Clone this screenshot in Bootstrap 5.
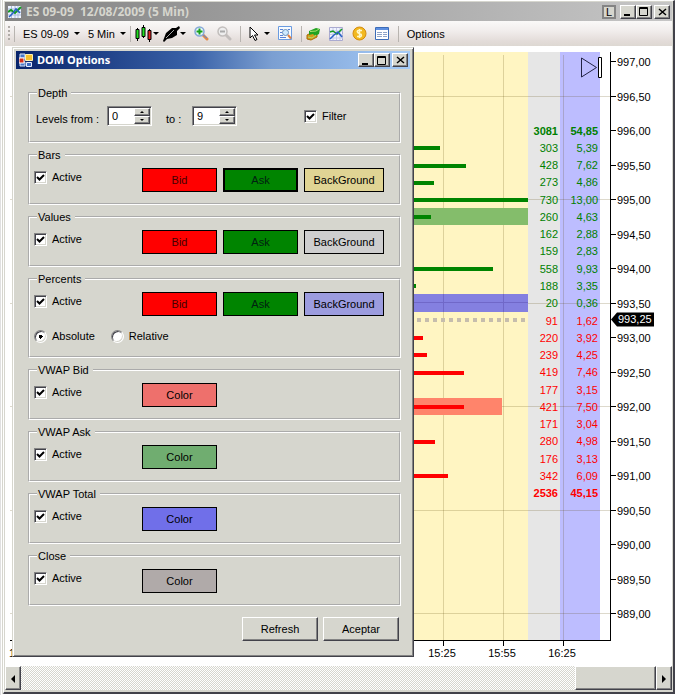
<!DOCTYPE html>
<html lang="es">
<head>
<meta charset="utf-8">
<meta name="viewport" content="width=device-width, initial-scale=1">
<title>ES 09-09 12/08/2009 (5 Min)</title>
<link href="https://cdn.jsdelivr.net/npm/bootstrap@5.3.0/dist/css/bootstrap.min.css" rel="stylesheet">
<style>
:root{--face:#d6d6ce;--shade:#848484;--dark:#42424a}
body{font:11px/14px "Liberation Sans",Arial,sans-serif;color:#000;background:#fff;padding:0 1px 2px 2px;border-left:1px solid #e0e0e0}
button,input{font:inherit;color:inherit}
.app-window{min-height:calc(100vh - 2px);background:var(--face);border:solid;border-width:1px 2px 2px 1px;border-color:#fff var(--dark) var(--dark) #fff;padding:1px 1px 2px;box-shadow:-1px 0 0 #d6d6ce}
.caption-bar{height:18px;color:#fff;font:bold 12px/18px "Noto Sans",Tahoma,sans-serif;white-space:pre}
.chart-caption{height:19px;line-height:19px;background:linear-gradient(90deg,#848484,#c6c6c6);color:#d6d6ce;padding:0 2px 0 3px}
.dialog-caption{background:linear-gradient(90deg,#08246b,#3a62a8 45%,#7b9fd2 65%,#a5cbf7);padding:0 2px 0 3px;font-size:11px}
.bevel{background:var(--face);border:1px solid;border-color:#fff var(--dark) var(--dark) #fff;box-shadow:inset -1px -1px 0 var(--shade);border-radius:0;padding:0;color:#000}
.cap-btn{width:16px;height:14px;display:flex;align-items:center;justify-content:center}
.l-btn{width:14px;height:14px;border:2px solid #848484;background:var(--face);font:11px/10px "Liberation Sans",sans-serif;padding:0;color:#000}
.tool-strip{height:25px;background:linear-gradient(#faf9f8,#f1edec 40%,#e3dcd9 80%,#ddd8d2);padding-left:3px}
.tool-strip button{border:0;background:none;padding:0;display:flex;align-items:center;white-space:nowrap}
.grip{width:2px;height:16px;background:repeating-linear-gradient(#b0aca8 0 2px,transparent 2px 4px)}
.divider{width:1px;height:16px;background:#b8b4b0}
.caret{width:0;border:3px solid transparent;border-top-color:#000;border-bottom:0;margin-left:5px}
.chart-area{background:#fff;min-height:620px}
.ladder{width:72px;height:380px;margin:76px 72px 0 auto;position:relative;text-align:right;table-layout:fixed;line-height:14px}
.ladder td{padding:0 2px 0 0}
.ladder td:first-child{width:32px}
.up{color:#008000}.down{color:#f00}
.chart-area text{font-size:11px}
.scroll-strip{height:24px;background:repeating-conic-gradient(#fff 0 25%,#d6d6ce 0 50%) 0 0/2px 2px}
.scroll-strip button{height:24px;width:16px}
.scroll-strip .thumb{width:81px}
.dialog-window{position:absolute;left:7px;top:1px;width:402px;background:var(--face);border:1px solid;border-color:var(--face) var(--dark) var(--dark) var(--face);box-shadow:inset 1px 1px 0 #fff,inset -1px -1px 0 var(--shade);padding:3px}
.dialog-content{padding:17px 9px 12px 12px}
.group-box{border:2px groove #fff;padding:6px 4px 0;margin:0 0 5px;min-height:57px}
.group-box legend{float:none;width:auto;font:inherit;margin:0 0 0 3px;padding:0 4px 0 1px}
.group-box.tall{min-height:86px}
.option-grid{display:grid;grid-template-columns:102px 75px 75px 80px;column-gap:6px;align-items:start}
.option-grid .check-line{margin-top:2px}
.check-line{display:flex;align-items:center;gap:5px}
.check-line input{appearance:none;margin:0;width:13px;height:13px;background:#fff;border:1px solid;border-color:#848484 #fff #fff #848484;box-shadow:inset 1px 1px 0 var(--dark),inset -1px -1px 0 var(--face)}
.check-line input[type=checkbox]:checked{background:#fff url("data:image/svg+xml,%3Csvg xmlns='http://www.w3.org/2000/svg' viewBox='0 0 11 11'%3E%3Cpath d='M2 5 4.500 7.500 9 3' fill='none' stroke='%23000' stroke-width='2'/%3E%3C/svg%3E")}
.check-line input[type=radio]{border-radius:50%}
.check-line input[type=radio]:checked{background:radial-gradient(circle,#000 0 2px,#fff 2px)}
.swatch{height:24px;border:1px solid #000;padding:0;border-radius:0}
.chosen{border-width:2px}
.c-red{background:#f00;color:#400}.c-green{background:#008400;color:#021}.c-sand{background:#e0d494}
.c-face{background:#cecece}.c-lilac{background:#9c9cde}.c-rose{background:#ee706c}
.c-moss{background:#70ad70}.c-blue{background:#706fe9}.c-ash{background:#b0aaa9}
.spin{width:45px;height:20px;background:#fff;border:1px solid;border-color:#848484 #fff #fff #848484;box-shadow:inset 1px 1px 0 var(--dark),inset -1px -1px 0 var(--face);padding:1px}
.spin input{border:0;background:none;padding:0 0 0 3px;width:25px;outline:0}
.spin .bevel{width:16px;height:8px;display:flex;align-items:center;justify-content:center}
.wide-btn{width:76px;height:24px}
.depth-label{width:73px;padding:5px 0 0 2px;white-space:nowrap}
.to-label{width:40px;padding:5px 0 0 14px}
.filter-line{margin-left:67px}
.mode-line{gap:16px;margin-top:13px}
.dialog-close{margin-left:2px}
.dialog-actions{gap:5px;padding:6px 2px 0 0}
</style>
<script src="https://cdn.jsdelivr.net/npm/bootstrap@5.3.0/dist/js/bootstrap.bundle.min.js"></script>
</head>
<body>
<main class="app-window d-flex flex-column">
  <header class="caption-bar chart-caption d-flex align-items-center">
    <svg width="14" height="14" viewBox="0 0 14 14" class="me-1" aria-hidden="true"><path d="M0 1h13v12H0z" fill="#eef4ff"/><path d="M0 4h13M0 7h13M0 10h13M3.500 1v12M7 1v12M10 1v12" stroke="#a8b8dc"/><path d="m0 7 3-2 4 3 6-6" fill="none" stroke="#159a22" stroke-width="2"/><path d="m1 12 4-4 3-4 4 4" fill="none" stroke="#2761c7" stroke-width="1.500"/></svg>
    <span>ES 09-09  12/08/2009 (5 Min)</span>
    <div class="d-flex ms-auto align-items-center">
      <button class="l-btn me-1">L</button>
      <button class="bevel cap-btn" aria-label="Minimize"><svg width="10" height="9"><path d="M1 7h6v2H1z"/></svg></button>
      <button class="bevel cap-btn" aria-label="Maximize"><svg width="10" height="9"><path d="M.500.500h8v8h-8zM0 1.500h9" fill="none" stroke="#000"/></svg></button>
      <button class="bevel cap-btn dialog-close" aria-label="Close"><svg width="9" height="8"><path d="m1 1 7 6M8 1 1 7" stroke="#000" stroke-width="1.500"/></svg></button>
    </div>
  </header>
  <nav class="tool-strip d-flex align-items-center" aria-label="Chart tools">
    <span class="grip"></span><span class="divider ms-1"></span>
    <button class="ms-2">ES 09-09<span class="caret"></span></button>
    <button class="ms-2">5 Min<span class="caret"></span></button>
    <span class="divider ms-1"></span>
    <button class="ms-1" aria-label="Chart style"><svg width="18" height="17"><path d="M2.500 3v13M8.500 0v13M14.500 4v13" stroke="#000"/><path d="M1 4.500h3v9H1zM7 2.500h3v9H7z" fill="#21e021" stroke="#000"/><path d="M13 5.500h3v9h-3z" fill="#e02020" stroke="#000"/></svg><span class="caret ms-0"></span></button>
    <button class="ms-1" aria-label="Draw"><svg width="17" height="16"><path d="m0 15 3-8 6-5h4l3-2 1 2-3 3v4l-5 3-5 1-3 3z"/><path d="m3 12 8-8" stroke="#aaa"/></svg><span class="caret ms-0"></span></button>
    <button class="ms-2" aria-label="Zoom in"><svg width="15" height="15"><path d="m9 9 4 4" stroke="#e08a4a" stroke-width="3" stroke-linecap="round"/><path d="m8 8 5 4" stroke="#5b83d6"/><circle cx="5.500" cy="5.500" r="4.500" fill="#e8f6ff" stroke="#84a9d6" stroke-width="1.500"/><path d="M2.500 5.500h6M5.500 2.500v6" stroke="#18a018" stroke-width="2"/></svg></button>
    <button class="ms-2" aria-label="Zoom out" disabled><svg width="15" height="15"><path d="m9 9 4 4" stroke="#c2bebc" stroke-width="3" stroke-linecap="round"/><circle cx="5.500" cy="5.500" r="4.500" fill="#eee" stroke="#c2bebc" stroke-width="1.500"/><path d="M3 5.500h5" stroke="#aaa" stroke-width="2"/></svg></button>
    <span class="divider ms-2"></span>
    <button class="ms-2" aria-label="Pointer"><svg width="11" height="16"><path d="M1 1v11l2.500-2.500 2.500 5 2-1-2.500-4.500H9z" fill="#fff" stroke="#000"/></svg><span class="caret ms-1"></span></button>
    <button class="ms-2" aria-label="Data box"><svg width="15" height="15"><path d="M.5.5h13v13H.5z" fill="#f8fbff" stroke="#6a9be0"/><path d="M2 3.500h3M2 6.500h2M2 9.500h3M2 11.500h6M10 3.500h2" stroke="#5b83d6"/><circle cx="7.500" cy="6.500" r="3" fill="#cfeaff" stroke="#6a8fb8"/><path d="m10 9 3 3.500" stroke="#e08040" stroke-width="2"/></svg></button>
    <span class="divider ms-2"></span>
    <button class="ms-1" aria-label="Trader"><svg width="15" height="14"><path d="m1 8 4-2 6 1v3l-6 3-4-1z" fill="#d69a18" stroke="#a66d08"/><path d="m3 4 7-3 4 1-1 5-4 2-2-2-4 1z" fill="#22a322"/><path d="M4 4.500 10 4l3-2M2 10l4 1 4-3" stroke="#a9e36d" fill="none"/></svg></button>
    <button class="ms-2" aria-label="Chart"><svg width="15" height="14"><path d="M.5.5h13v13H.5z" fill="#f0f3ff" stroke="#aaaad0"/><path d="M1 4h13M1 7.500h13M1 11h13M4 1v12M7.500 1v12M11 1v12" stroke="#c4cae6"/><path d="m1 5 3-1 4 3 5-5" fill="none" stroke="#159a22" stroke-width="1.500"/><path d="m1 12 4-4 4-3 4 5" fill="none" stroke="#2761c7" stroke-width="1.500"/></svg></button>
    <button class="ms-2" aria-label="Account"><svg width="15" height="15"><circle cx="7.500" cy="7.500" r="6.500" fill="#f2b920" stroke="#d48b0c"/><path d="M10 4.500H6.500C4.500 4.500 5 7 7.500 7.500S10 10.500 8 10.500H5M7.500 3v9" fill="none" stroke="#fff8cc" stroke-width="1.500"/></svg></button>
    <button class="ms-2" aria-label="Properties"><svg width="15" height="13"><path d="M.5.5h13v12H.5z" fill="#fff" stroke="#3c6cb8"/><path d="M1 1h12v2H1z" fill="#5d8fe0"/><path d="M2 5.500h5M2 7.500h5M2 9.500h5M8 5.500h4M8 7.500h4M8 9.500h4" stroke="#8fa3c8"/></svg></button>
    <span class="divider ms-2"></span>
    <button class="ms-2">Options</button>
  </nav>

  <section class="chart-area position-relative flex-grow-1 overflow-hidden" aria-label="Depth of market chart">
    <svg class="position-absolute top-0 start-0 w-100 h-100">
      <svg x="100%" overflow="visible"><g transform="translate(-672 -46)">
        <path d="M12 52h516v588H12z" fill="#fff5c2"/><path d="M5 46h8v594H5z" fill="#fff"/><path d="M528 52h32v588h-32z" fill="#e6e6e6"/><path d="M560 52h40v588h-40z" fill="#bdbdff"/>
        <g id="gridLines" stroke="#54400033" shape-rendering="crispEdges"><path d="M443.500 55v585M503.500 55v585M563.500 55v585"/></g>
        <path d="M414 208h114v17H414z" fill="#84bd6b"/><path d="M414 294h114v18H414z" fill="#8480e0"/><path d="M414 302.500h114M443.500 294v18M503.500 294v18" stroke="#7068c8"/>
        <path d="M414 398h88v17h-88z" fill="#ff846b"/>
        <path d="M417 320h111" stroke="#c6bdad" stroke-width="4" stroke-dasharray="4 4"/>
        <g id="volumeBars"></g>
        <path d="M610.500 52v588.500H10M443.500 640v6M503.500 640v6M563.500 640v6" fill="none" stroke="#000" shape-rendering="crispEdges"/>
        <path d="M581.500 58v19l15-9.500z" fill="none" stroke="#224"/><path d="M598.500 57.500h3v20h-3z" fill="#fff" stroke="#000"/>
        <g id="priceScale"></g>
        <path d="m611 319.500 6-7h37v14h-37z"/><text x="618" y="323" fill="#fff">993,25</text>
        <g text-anchor="middle"><text x="442" y="657">15:25</text><text x="502" y="657">15:55</text><text x="562" y="657">16:25</text></g>
        <text x="9" y="657">1</text>
      </g></svg>
    </svg>
    <table class="ladder" aria-label="Volume and percent by level"><tbody id="ladderRows"></tbody></table>

    <section class="dialog-window" role="dialog" aria-label="DOM Options">
      <header class="caption-bar dialog-caption d-flex align-items-center">
        <svg width="14" height="14" class="me-1" aria-hidden="true"><path d="M1 1h5v4H1zM1 9h5v4H1z" fill="#4878c8" stroke="#d8e4f8"/><path d="M0 5h5v5H0z" fill="#d22c18" stroke="#fff"/><path d="M6.500 1.500h7v6h-7z" fill="#f4c030" stroke="#fff2b0"/><path d="M7.500 9.500h5v4h-5z" fill="#3f6cc0" stroke="#e4ecff"/></svg>
        <span>DOM Options</span>
        <div class="d-flex ms-auto">
          <button class="bevel cap-btn" aria-label="Minimize dialog"><svg width="10" height="9"><path d="M1 7h6v2H1z"/></svg></button>
          <button class="bevel cap-btn" aria-label="Maximize dialog"><svg width="10" height="9"><path d="M.500.500h8v8h-8zM0 1.500h9" fill="none" stroke="#000"/></svg></button>
          <button class="bevel cap-btn dialog-close" aria-label="Close dialog"><svg width="9" height="8"><path d="m1 1 7 6M8 1 1 7" stroke="#000" stroke-width="1.500"/></svg></button>
        </div>
      </header>
      <form class="dialog-content">
        <fieldset class="group-box"><legend>Depth</legend>
          <div class="d-flex align-items-center">
            <label for="lvFrom" class="depth-label">Levels from :</label>
            <div class="spin d-flex"><input id="lvFrom" value="0" inputmode="numeric"><div><button type="button" class="bevel" aria-label="Increase from"><svg width="4" height="2"><path d="M0 2h4L2 0z"/></svg></button><button type="button" class="bevel" aria-label="Decrease from"><svg width="4" height="2"><path d="M0 0h4L2 2z"/></svg></button></div></div>
            <label for="lvTo" class="to-label">to :</label>
            <div class="spin d-flex"><input id="lvTo" value="9" inputmode="numeric"><div><button type="button" class="bevel" aria-label="Increase to"><svg width="4" height="2"><path d="M0 2h4L2 0z"/></svg></button><button type="button" class="bevel" aria-label="Decrease to"><svg width="4" height="2"><path d="M0 0h4L2 2z"/></svg></button></div></div>
            <label class="check-line filter-line"><input type="checkbox" checked>Filter</label>
          </div>
        </fieldset>
        <fieldset class="group-box"><legend>Bars</legend><div class="option-grid"><label class="check-line"><input type="checkbox" checked>Active</label><button type="button" class="swatch c-red">Bid</button><button type="button" class="swatch c-green chosen">Ask</button><button type="button" class="swatch c-sand">BackGround</button></div></fieldset>
        <fieldset class="group-box"><legend>Values</legend><div class="option-grid"><label class="check-line"><input type="checkbox" checked>Active</label><button type="button" class="swatch c-red">Bid</button><button type="button" class="swatch c-green">Ask</button><button type="button" class="swatch c-face">BackGround</button></div></fieldset>
        <fieldset class="group-box tall"><legend>Percents</legend><div class="option-grid"><label class="check-line"><input type="checkbox" checked>Active</label><button type="button" class="swatch c-red">Bid</button><button type="button" class="swatch c-green">Ask</button><button type="button" class="swatch c-lilac">BackGround</button></div>
          <div class="d-flex mode-line"><label class="check-line"><input type="radio" name="mode" checked>Absolute</label><label class="check-line"><input type="radio" name="mode">Relative</label></div></fieldset>
        <fieldset class="group-box"><legend>VWAP Bid</legend><div class="option-grid"><label class="check-line"><input type="checkbox" checked>Active</label><button type="button" class="swatch c-rose">Color</button></div></fieldset>
        <fieldset class="group-box"><legend>VWAP Ask</legend><div class="option-grid"><label class="check-line"><input type="checkbox" checked>Active</label><button type="button" class="swatch c-moss">Color</button></div></fieldset>
        <fieldset class="group-box"><legend>VWAP Total</legend><div class="option-grid"><label class="check-line"><input type="checkbox" checked>Active</label><button type="button" class="swatch c-blue">Color</button></div></fieldset>
        <fieldset class="group-box"><legend>Close</legend><div class="option-grid"><label class="check-line"><input type="checkbox" checked>Active</label><button type="button" class="swatch c-ash">Color</button></div></fieldset>
        <div class="d-flex justify-content-end dialog-actions"><button type="button" class="bevel wide-btn">Refresh</button><button type="button" class="bevel wide-btn">Aceptar</button></div>
      </form>
    </section>
  </section>
  <div class="scroll-strip d-flex">
    <button class="bevel" aria-label="Scroll left"><svg width="4" height="8"><path d="M4 0v8L0 4z"/></svg></button>
    <button class="bevel thumb ms-auto" aria-label="Scroll position"></button>
    <button class="bevel" aria-label="Scroll right"><svg width="4" height="8"><path d="M0 0v8l4-4z"/></svg></button>
  </div>
</main>
<script>
const ladder = [[3081,'54,85'],[303,'5,39'],[428,'7,62'],[273,'4,86'],[730,'13,00'],[260,'4,63'],[162,'2,88'],[159,'2,83'],[558,'9,93'],[188,'3,35'],[20,'0,36'],
  [91,'1,62'],[220,'3,92'],[239,'4,25'],[419,'7,46'],[177,'3,15'],[421,'7,50'],[171,'3,04'],[280,'4,98'],[176,'3,13'],[342,'6,09'],[2536,'45,15']];
const priceY = p => Math.round(62 + (997 - p) * 69);
let rows = '', bars = '', scale = '', lines = '';
ladder.forEach(([v, pct], i) => {
  const side = i < 11 ? 'up' : 'down', total = i === 0 || i === 21;
  rows += `<tr class="${side}${total ? ' fw-bold' : ''}"><td>${v}</td><td>${pct}</td></tr>`;
  const end = Math.round(377.6 + v * .206);
  if (!total && end > 414) bars += `<rect x="414" y="${priceY(996 - i / 4) - 2}" width="${end - 414}" height="4" fill="${i < 11 ? '#008400' : '#f00'}"/>`;
});
for (let p = 997; p >= 989; p -= .5) {
  const y = priceY(p);
  scale += `<path d="M611 ${y - .5}h5" stroke="#000"/><text x="617" y="${y + 4}">${p.toFixed(2).replace('.', ',')}</text>`;
}
for (let p = 996.5; p >= 989; p -= 1.5) lines += `<path d="M10 ${priceY(p) - .5}h600"/>`;
document.getElementById('ladderRows').innerHTML = rows;
document.getElementById('volumeBars').innerHTML = bars;
document.getElementById('priceScale').innerHTML = scale;
document.getElementById('gridLines').innerHTML += lines;
</script>
</body>
</html>
